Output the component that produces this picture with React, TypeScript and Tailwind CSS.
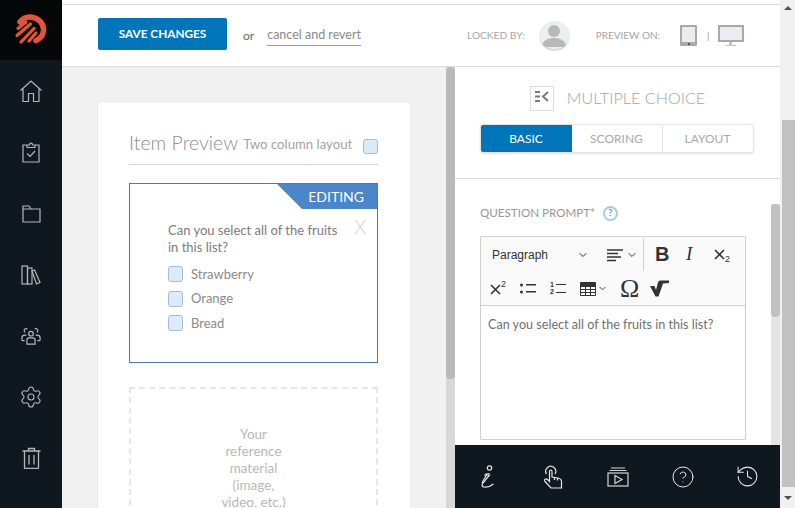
import { ChevronDown, CircleHelp, History, Settings } from 'lucide-react';

function Logo() {
    return (
        <svg width="34" height="32" viewBox="0 0 34 32" fill="none">
            <path d="M6 8C9 4 13 2.500 17 3C25 4 30 10 29.500 16.500C29 21 26 25 22 26.500" stroke="#e2553a" strokeWidth="5.500" strokeLinecap="round" />
            <path d="M4 14.500L12 8M3 21.500L16.500 10M7 28L20 14.500M15 27L22 19" stroke="#e2553a" strokeWidth="3.200" strokeLinecap="round" />
        </svg>
    );
}

function HomeIcon() {
    return (
        <svg width="22" height="23" viewBox="0 0 22 23" fill="none" stroke="#b4b6b8" strokeWidth="1.200">
            <path d="M.5 10.500L11 1l10.500 9.500M3 8.500V21.500h5.500V13.500h5V21.500H19V8.500" />
        </svg>
    );
}

function ClipboardIcon() {
    return (
        <svg width="18" height="21" viewBox="0 0 18 21" fill="none" stroke="#b4b6b8" strokeWidth="1.200">
            <path d="M5 3H1v17h16V3h-4M5 3h2.500c0-2.500 3-2.500 3 0H13v2.500H5z" />
            <path d="M5 11.500l3 3 5-5.500" />
        </svg>
    );
}

function FolderIcon() {
    return (
        <svg width="19" height="18" viewBox="0 0 19 18" fill="none" stroke="#b4b6b8" strokeWidth="1.200">
            <path d="M1 1h6l2 3h9v13H1zM1 4h8" />
        </svg>
    );
}

function LibraryIcon() {
    return (
        <svg width="20" height="20" viewBox="0 0 20 20" fill="none" stroke="#b4b6b8" strokeWidth="1.200">
            <rect x="1" y="1" width="5.500" height="18" />
            <rect x="6.500" y="3" width="4.500" height="16" />
            <path d="M11 6l2.500-1L19 17.500 15.500 19z" />
        </svg>
    );
}

function PeopleIcon() {
    return (
        <svg width="20" height="20" viewBox="0 0 22 22" fill="none" stroke="#b4b6b8" strokeWidth="1.300">
            <circle cx="11" cy="8.500" r="2.500" />
            <path d="M6.500 20v-4.500c0-1.500 1-2.500 2.500-2.500h4c1.500 0 2.500 1 2.500 2.500V20z" />
            <path d="M7 3.500a2 2 0 0 0-3.500 1.500c0 1 .5 1.500 1 2M15 3.500a2 2 0 0 1 3.500 1.500c0 1-.5 1.500-1 2M4 16H2c-.5 0-1-.5-1-1v-2c0-2 1.500-3 3.500-3H6M18 16h2c.5 0 1-.5 1-1v-2c0-2-1.500-3-3.500-3H16" />
        </svg>
    );
}

function TrashIcon() {
    return (
        <svg width="19" height="22" viewBox="0 0 19 22" fill="none" stroke="#b4b6b8" strokeWidth="1.300">
            <path d="M.5 4h18M6.500 4V1.500h6V4M2.500 4v16.500c0 .5.500 1 1 1h12c.5 0 1-.5 1-1V4M7 8v9.500M12 8v9.500" />
        </svg>
    );
}

function InfoIcon() {
    return (
        <svg width="14" height="23" viewBox="0 0 14 23" fill="none" stroke="#e6e6e6" strokeWidth="1.200">
            <circle cx="8.500" cy="3" r="2.200" />
            <path d="M8.500 8.500c-2 0-4 .5-4.500 1.500h4.500L2 18c-1.500 2-1 4 1 4 3 .5 7-1 9.500-3" />
            <path d="M5.500 10L1 18" />
        </svg>
    );
}

function HandIcon() {
    return (
        <svg width="20" height="24" viewBox="0 0 20 24" fill="none" stroke="#e6e6e6" strokeWidth="1.200">
            <path d="M3.500 9a5 5 0 1 1 8.500 0" />
            <path d="M6.500 6.500c0-2 2.500-2 2.500 0V12l6 1c2 .5 3.500 1.500 3.500 3.500V23H8L2 16.500c-1.500-2 1-3.500 2.500-2l2 2z" />
            <path d="M11.500 12v3M14.500 13v2.500" />
        </svg>
    );
}

function MediaIcon() {
    return (
        <svg width="22" height="20" viewBox="0 0 22 20" fill="none" stroke="#d6d6d6" strokeWidth="1.200">
            <path d="M4 1h14M2.500 3.500h17" />
            <rect x="1" y="6" width="20" height="13" />
            <path d="M8 8.500v8l7-4z" />
        </svg>
    );
}

function RootIcon() {
    return (
        <svg width="20" height="17" viewBox="0 0 20 17" fill="#333">
            <path d="M0 6h4.500l1.500 4L8 2.500C8.500 1 9.500.5 11 .5h8V3l-6 .5L8.500 16.500h-3z" />
        </svg>
    );
}

function CollapseIcon() {
    return (
        <svg width="14" height="12" viewBox="0 0 14 12" fill="#7a7a7a">
            <path d="M0 0h5v2H0zM0 4.500h5v2H0zM0 9h5v2H0z" />
            <path d="M13 1L8 5.500 13 10" fill="none" stroke="#7a7a7a" strokeWidth="2" />
        </svg>
    );
}

function ScriptX({ mark, up }: { mark: string; up?: boolean }) {
    return (
        <span className="relative flex w-[17px] h-[14px]">
            <svg width="11" height="11" viewBox="0 0 11 11" stroke="#333" strokeWidth="1.600" className="mt-[2px]">
                <path d="M1 1l9 9M10 1l-9 9" />
            </svg>
            <span className={up ? "absolute left-[11px] top-[-3px] text-[9px] leading-[10px] font-['Liberation_Sans',sans-serif]" : "absolute left-[11px] top-[7px] text-[9px] leading-[10px] font-['Liberation_Sans',sans-serif]"}>{mark}</span>
        </span>
    );
}

function Option({ label }: { label: string }) {
    return (
        <div className="flex items-center gap-[8px] h-[24.500px]">
            <span className="w-[15px] h-[16px] rounded-[3px] border border-[#a8bcd0] bg-[#dcebf9]" />
            <span className="text-[13px] text-[#8a8a8a] font-['Lato',sans-serif]">{label}</span>
        </div>
    );
}

export default function App() {
    return (
        <div className="flex h-[508px] w-[795px] overflow-hidden bg-white font-['Lato',sans-serif]">
            <aside className="w-[62px] shrink-0 bg-[#10181f] flex flex-col items-center">
                <div className="w-full h-[60px] bg-[#050709] flex items-center justify-center"><Logo /></div>
                <nav className="flex flex-col items-center pt-[1px]">
                    <div className="h-[61px] flex items-center"><HomeIcon /></div>
                    <div className="h-[61px] flex items-center"><ClipboardIcon /></div>
                    <div className="h-[61px] flex items-center"><FolderIcon /></div>
                    <div className="h-[61px] flex items-center"><LibraryIcon /></div>
                    <div className="h-[61px] flex items-center"><PeopleIcon /></div>
                    <div className="h-[61px] flex items-center text-[#b4b6b8]"><Settings size={24} strokeWidth={1.100} /></div>
                    <div className="h-[61px] flex items-center"><TrashIcon /></div>
                </nav>
            </aside>

            <div className="flex-1 flex flex-col min-w-0">
                <div className="h-[4px] shrink-0" />
                <header className="h-[63px] shrink-0 border-y border-[#dcdcdc] flex items-center pl-[36px]">
                    <button className="w-[129px] h-[32px] rounded-[2px] bg-[#0075b9] text-white text-[11.800px] font-bold mt-[-3px]">SAVE CHANGES</button>
                    <span className="ml-[16px] text-[12px] text-[#666]">or</span>
                    <span className="ml-[13px] text-[12.500px] text-[#8a8a8a] border-b border-[#999] leading-[20px]">cancel and revert</span>
                    <span className="ml-[106px] text-[10.200px] text-[#a5a5a5]">LOCKED BY:</span>
                    <span className="ml-[14px] w-[31px] h-[30px] rounded-full bg-[#eceef0] border-b-2 border-[#d8d8d8] flex items-center justify-center overflow-hidden">
                        <svg width="24" height="24" viewBox="0 0 24 24" fill="#b8b8b8">
                            <circle cx="12" cy="8" r="6" />
                            <path d="M0 24c0-6 5-9 12-9s12 3 12 9z" />
                        </svg>
                    </span>
                    <span className="ml-[26px] text-[10px] text-[#a5a5a5]">PREVIEW ON:</span>
                    <span className="relative ml-[20px] w-[17px] h-[21px] rounded-[1px] border-[2px] border-b-[4px] border-[#a9a9a9] bg-[#e9edf1]">
                        <span className="absolute left-[5.500px] bottom-[-3px] w-[2px] h-[2px] bg-[#555]" />
                    </span>
                    <span className="ml-[10px] text-[10px] text-[#999]">|</span>
                    <span className="ml-[8px] flex flex-col items-center">
                        <span className="w-[26px] h-[17px] border-[2px] border-[#a9a9a9] bg-[#e9edf1]" />
                        <span className="w-[3px] h-[3px] bg-[#c4c4c4]" />
                        <span className="w-[11px] h-px bg-[#c4c4c4]" />
                    </span>
                </header>

                <div className="flex-1 flex min-h-0">
                    <section className="w-[384px] shrink-0 bg-[#f1f1f1] pl-[36px] pt-[36px] overflow-hidden">
                        <div className="w-[312px] h-[500px] bg-white pl-[31px] pr-[32px] shadow-[-1px_0_0_#e6e6e6]">
                            <div className="h-[62px] flex items-end justify-between pb-[7px] border-b border-[#d6d6d6]">
                                <span className="text-[19.500px] font-light text-[#8f8f8f] leading-[28px]">Item Preview</span>
                                <span className="text-[13.200px] text-[#a3a3a3] ml-[5px] mr-auto mb-[2px]">Two column layout</span>
                                <span className="w-[15px] h-[15px] mb-[3px] rounded-[3px] border border-[#a8bcd0] bg-[#dcebf9]" />
                            </div>
                            <div className="relative mt-[18px] h-[180px] border border-[#4a7bb0] pl-[38px] pt-[38px]">
                                <div className="absolute right-0 top-0 w-[100px] h-[25px] bg-[#4a86c8] text-white text-[14px] [clip-path:polygon(0_0,100%_0,100%_100%,25%_100%)] flex items-center justify-end pr-[13px]">EDITING</div>
                                <span className="absolute right-[11px] top-[29px] text-[19px] text-[#cfcfcf] font-light">X</span>
                                <p className="w-[178px] text-[13px] leading-[17px] text-[#7c7c7c]">Can you select all of the fruits in this list?</p>
                                <div className="mt-[6px]">
                                    <Option label="Strawberry" />
                                    <Option label="Orange" />
                                    <Option label="Bread" />
                                </div>
                            </div>
                            <div className="mt-[24px] h-[200px] border-2 border-dashed border-[#e6e6e6] pt-[37px] text-center text-[13.500px] leading-[17px] text-[#b8b8b8]">
                                <p>Your</p>
                                <p>reference</p>
                                <p>material</p>
                                <p>(image,</p>
                                <p>video, etc.)</p>
                            </div>
                        </div>
                    </section>

                    <div className="w-[9px] shrink-0 bg-[#d8d8d8] flex flex-col">
                        <div className="h-[312px] rounded-[4px] bg-[#b9b9b9]" />
                    </div>

                    <section className="flex-1 flex flex-col min-w-0">
                        <div className="h-[112px] shrink-0 border-b border-[#dcdcdc] flex flex-col items-center">
                            <div className="mt-[19px] flex items-center">
                                <span className="w-[24px] h-[25px] border border-[#dcdcdc] flex items-start justify-center pt-[4px]"><CollapseIcon /></span>
                                <span className="ml-[13px] text-[16.200px] font-light text-[#a3a3a3]">MULTIPLE CHOICE</span>
                            </div>
                            <div className="mt-[13px] ml-[-2px] w-[274px] h-[29px] rounded-[3px] border border-[#e3e3e3] shadow-[0_1px_2px_rgba(0,0,0,0.12)] flex text-[12px] overflow-hidden">
                                <span className="w-[91px] bg-[#0075b9] text-white flex items-center justify-center">BASIC</span>
                                <span className="w-[91px] border-r border-[#e3e3e3] text-[#a9a9a9] flex items-center justify-center">SCORING</span>
                                <span className="flex-1 text-[#a9a9a9] flex items-center justify-center">LAYOUT</span>
                            </div>
                        </div>
                        <div className="flex-1 flex min-h-0">
                            <div className="flex-1 min-w-0 pl-[25px] pt-[26px]">
                                <div className="flex items-center h-[16px]">
                                    <span className="text-[11.600px] text-[#979797]">QUESTION PROMPT*</span>
                                    <span className="ml-[8px] w-[15px] h-[15px] rounded-full border-2 border-[#a9c8ee] text-[9px] font-bold text-[#6b8fb8] flex items-center justify-center">?</span>
                                </div>
                                <div className="mt-[15px] w-[266px] h-[204px] border border-[#cfcfcf] rounded-[1px]">
                                    <div className="h-[69px] bg-[#fafafa] border-b border-[#cfcfcf] text-[#333]">
                                        <div className="h-[34px] flex items-center">
                                            <div className="w-[163px] h-[33px] border-r border-[#cfcfcf] flex items-center pl-[11px] pt-[2px]">
                                                <span className="text-[12px] font-['Liberation_Sans',sans-serif] w-[85px]">Paragraph</span>
                                                <ChevronDown size={12} strokeWidth={2} />
                                                <svg width="16" height="13" viewBox="0 0 16 13" fill="none" stroke="#333" strokeWidth="1.500" className="ml-[18px]">
                                                    <path d="M0 1h16M0 4.500h11M0 8h14M0 11.500h9" />
                                                </svg>
                                                <ChevronDown size={12} strokeWidth={2} className="ml-[3px]" />
                                            </div>
                                            <span className="ml-[11px] w-[13px] text-[20px] leading-[20px] font-bold font-['Liberation_Sans',sans-serif]">B</span>
                                            <span className="ml-[18px] w-[11px] text-[19px] leading-[20px] italic font-['Liberation_Serif',serif]">I</span>
                                            <span className="ml-[17px]"><ScriptX mark="2" /></span>
                                        </div>
                                        <div className="h-[34px] flex items-center pl-[9px] pt-[1px]">
                                            <ScriptX mark="2" up />
                                            <svg width="16" height="11" viewBox="0 0 16 11" fill="#333" className="ml-[13px]">
                                                <circle cx="1.500" cy="2" r="1.500" />
                                                <circle cx="1.500" cy="9" r="1.500" />
                                                <path d="M6 1h10v1.500H6zM6 8h10v1.500H6z" />
                                            </svg>
                                            <span className="relative ml-[14px] w-[16px] h-[14px]">
                                                <span className="absolute left-0 top-[-1px] text-[7px] leading-[8px] font-bold font-['Liberation_Sans',sans-serif]">1</span>
                                                <span className="absolute left-0 top-[6px] text-[7px] leading-[8px] font-bold font-['Liberation_Sans',sans-serif]">2</span>
                                                <span className="absolute left-[6px] top-[2px] w-[10px] h-[1.500px] bg-[#333]" />
                                                <span className="absolute left-[6px] top-[10px] w-[10px] h-[1.500px] bg-[#333]" />
                                            </span>
                                            <svg width="16" height="14" viewBox="0 0 16 14" fill="none" stroke="#333" strokeWidth="1" className="ml-[14px]">
                                                <path d="M.5.5h15v13H.5zM.5 4.500h15M.5 7.500h15M.5 10.500h15M5.500 4.500v9M10.500 4.500v9" />
                                                <path d="M.5 2.500h15" strokeWidth="3.500" />
                                            </svg>
                                            <ChevronDown size={11} strokeWidth={2} className="ml-[1px]" />
                                            <span className="ml-[12px] text-[26px] leading-[28px] font-['Liberation_Serif',serif]">Ω</span>
                                            <span className="ml-[11px]"><RootIcon /></span>
                                        </div>
                                    </div>
                                    <p className="pl-[7px] pt-[11px] text-[12.600px] leading-[16px] text-[#6f6f6f]">Can you select all of the fruits in this list?</p>
                                </div>
                            </div>
                            <div className="w-[9px] shrink-0 mt-[25px] bg-[#e4e4e4]">
                                <div className="h-[113px] rounded-[4px] bg-[#c1c1c1]" />
                            </div>
                        </div>
                        <footer className="h-[63px] shrink-0 bg-[#10181f] flex items-center text-[#e6e6e6]">
                            <div className="w-[65px] flex justify-center"><InfoIcon /></div>
                            <div className="w-[65px] flex justify-center"><HandIcon /></div>
                            <div className="w-[65px] flex justify-center"><MediaIcon /></div>
                            <div className="w-[65px] flex justify-center"><CircleHelp size={24} strokeWidth={1} /></div>
                            <div className="w-[65px] flex justify-center"><History size={25} strokeWidth={1} /></div>
                        </footer>
                    </section>
                </div>
            </div>

            <div className="w-[15px] shrink-0 bg-[#f1f1f1] flex flex-col items-center">
                <span className="mt-[6px] h-0 w-0 border-x-[4px] border-b-[4px] border-x-transparent border-b-[#505050]" />
                <div className="mt-[110px] ml-[2px] w-[13px] h-[367px] bg-[#c1c1c1]" />
                <span className="mt-[9px] h-0 w-0 border-x-[4px] border-t-[4px] border-x-transparent border-t-[#505050]" />
            </div>
        </div>
    );
}
